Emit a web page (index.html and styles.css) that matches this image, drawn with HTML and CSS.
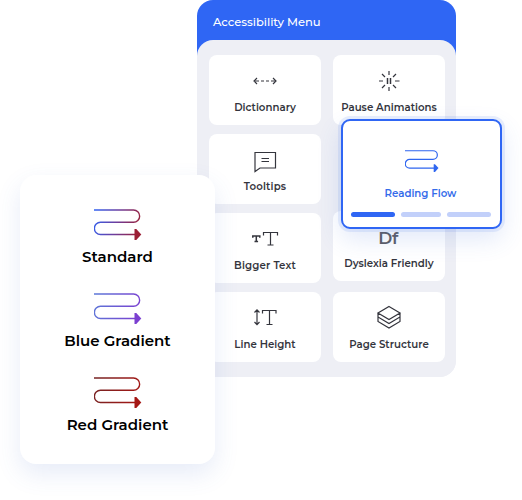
FILE: index.html
```html
<!DOCTYPE html>
<html lang="en">
<head>
<meta charset="utf-8">
<title>Accessibility Menu</title>
<link rel="stylesheet" href="styles.css">
</head>
<body>
<svg class="defs" width="0" height="0">
  <defs>
    <linearGradient id="standard" gradientUnits="userSpaceOnUse" x1="0" y1="0" x2="48" y2="12"><stop stop-color="#2f63f5"/><stop offset=".5" stop-color="#6c3e9e"/><stop offset="1" stop-color="#9c1f35"/></linearGradient>
    <linearGradient id="blue" gradientUnits="userSpaceOnUse" x1="0" y1="0" x2="48" y2="12"><stop stop-color="#5c79d8"/><stop offset="1" stop-color="#7b3fd0"/></linearGradient>
    <linearGradient id="red" gradientUnits="userSpaceOnUse" x1="0" y1="0" x2="48" y2="12"><stop stop-color="#762424"/><stop offset="1" stop-color="#a51714"/></linearGradient>
  </defs>
</svg>
<main class="stage">
  <section class="panel">
    <h1 class="title">Accessibility Menu</h1>
    <div class="body">
      <div class="column">
        <div class="tile"><svg class="icon" viewBox="0 0 28 28"><path d="M6 11l-3 3 3 3M22 11l3 3-3 3"/><path d="M3.500 14H8m2 0h3m2 0h3m2 0h4.500"/></svg><span class="label">Dictionnary</span></div>
        <div class="tile"><svg class="icon" viewBox="0 0 28 28"><path d="M4 6.500h20.500v15.500H9L4 25.500zM10.500 12.500h7.500M10.500 15.500h7.500"/></svg><span class="label looser">Tooltips</span></div>
        <div class="tile"><svg class="icon" viewBox="0 0 28 28"><path d="M12.500 10.500V7.500h14V10.500M19.500 7.500v12.500M16.500 20h6"/><path class="heavy" d="M1.800 12.700v-1.700h7v1.700M5.300 11v5.700M3.500 16.500h3.600"/></svg><span class="label looser">Bigger Text</span></div>
        <div class="tile"><svg class="icon" viewBox="0 0 28 28"><path d="M6 6v14.500M3.500 8.500l2.500-2.700 2.500 2.700M3.500 18l2.500 2.700 2.500-2.700M11.500 9.500V6.500h13.500v3M18.500 6.500v14M15.500 20.500h6"/></svg><span class="label">Line Height</span></div>
      </div>
      <div class="column second">
        <div class="tile"><svg class="icon" viewBox="0 0 28 28"><path d="M14 4v4M14 20v4M4 14h4M20 14h4.500M7 7l3 3M21 7l-3 3M7 21l3-3M21 21l-3-3"/><path class="bars" d="M12.500 11v6M15.500 11v6"/></svg><span class="label">Pause Animations</span></div>
        <div class="tile vacant"></div>
        <div class="tile"><span class="df">Df</span><span class="label">Dyslexia Friendly</span></div>
        <div class="tile last"><svg class="icon" viewBox="0 0 28 28"><path d="M14 2.500L25 9 14 15.500 3 9zM3 9v4l11 6.500L25 13V9M3 13v4.500L14 24l11-6.500V13"/></svg><span class="label">Page Structure</span></div>
      </div>
    </div>
  </section>

  <section class="popup">
    <svg class="flow small" viewBox="0 0 48 31" stroke="#2f66f0" fill="#2f66f0"><path class="line" d="M0 1h39.500a6 6 0 0 1 0 12.300H6.500a6 6 0 0 0 0 12.200H41"/><path stroke="none" d="M40.500 20h1.800l5 5.500-5 5.500h-1.800z"/></svg>
    <span class="popup-label">Reading Flow</span>
    <div class="steps"><i class="step active"></i><i class="step mid"></i><i class="step"></i></div>
  </section>

  <section class="options">
    <div class="option"><svg class="flow" viewBox="0 0 48 31" stroke="url(#standard)" fill="#9c1f35"><path class="line" d="M0 1h39.500a6 6 0 0 1 0 12.300H6.500a6 6 0 0 0 0 12.200H41"/><path stroke="none" d="M40.500 20h1.800l5 5.500-5 5.500h-1.800z"/></svg><span class="name">Standard</span></div>
    <div class="option"><svg class="flow" viewBox="0 0 48 31" stroke="url(#blue)" fill="#7b3fd0"><path class="line" d="M0 1h39.500a6 6 0 0 1 0 12.300H6.500a6 6 0 0 0 0 12.200H41"/><path stroke="none" d="M40.500 20h1.800l5 5.500-5 5.500h-1.800z"/></svg><span class="name">Blue Gradient</span></div>
    <div class="option"><svg class="flow" viewBox="0 0 48 31" stroke="url(#red)" fill="#a51714"><path class="line" d="M0 1h39.500a6 6 0 0 1 0 12.300H6.500a6 6 0 0 0 0 12.200H41"/><path stroke="none" d="M40.500 20h1.800l5 5.500-5 5.500h-1.800z"/></svg><span class="name">Red Gradient</span></div>
  </section>
</main>
</body>
</html>
```
FILE: styles.css
```css
* { box-sizing: border-box; }
body { margin: 0; background: #fff; font-family: Montserrat, Inter, sans-serif; }
.defs { position: absolute; }
.stage { position: relative; width: 522px; height: 500px; overflow: hidden; }
.panel { width: 259px; height: 377px; margin-left: 197px; border-radius: 16px; background: linear-gradient(#2f66f4 60px, #eeeff5 60px); overflow: hidden; }
.title { margin: 0; height: 40px; padding: 13px 0 0 16px; color: #fff; font-size: 11.5px; line-height: 18px; font-weight: 500; letter-spacing: -.02px; }
.body { display: flex; gap: 12px; height: 337px; padding: 15px 11px 0 12px; border-radius: 16px; background: #eeeff5; }
.column { display: flex; flex-direction: column; gap: 9px; width: 112px; }
.second { gap: 8px; }
.last { margin-top: 3px; }
.tile { display: flex; flex-direction: column; align-items: center; height: 70px; padding-top: 12px; border-radius: 8px; background: #fff; }
.vacant { background: none; }
.icon { width: 28px; height: 28px; fill: none; stroke: #34353d; stroke-width: 1.2; }
.heavy, .bars { stroke-width: 1.5; }
.label { margin-top: 5px; font-size: 10.2px; line-height: 16px; font-weight: 600; letter-spacing: .02px; color: #34353d; white-space: nowrap; }
.looser { letter-spacing: .15px; }
.df { height: 28px; padding-top: 4px; margin-left: -2px; font-size: 17px; line-height: 22px; font-weight: 600; letter-spacing: -.3px; color: #5c5d65; }
.popup { position: absolute; left: 341px; top: 119px; width: 161px; height: 110px; padding: 28px 0 0; display: flex; flex-direction: column; align-items: center; border: 2px solid #2f66f4; border-radius: 9px; background: #fff; box-shadow: 0 0 0 3px rgba(75,120,235,.12), 0 10px 24px rgba(70,115,220,.16); }
.flow { display: block; width: 48px; height: 31px; }
.line { fill: none; stroke-width: 1.4; }
.small { width: 34px; height: 22px; margin-top: 1px; }
.small .line { stroke-width: 1.7; }
.popup-label { margin: 14px 2px 0 0; font-size: 10.2px; line-height: 16px; font-weight: 600; letter-spacing: 0; color: #356bea; }
.steps { display: flex; align-items: center; gap: 6px; margin: 10px 2px 0 0; }
.step { width: 44px; height: 5px; border-radius: 3px; background: #c2d0fa; }
.active { background: #2f66f4; }
.mid { width: 40px; }
.options { position: absolute; left: 20px; top: 175px; width: 195px; height: 289px; padding-top: 34px; display: flex; flex-direction: column; border-radius: 16px; background: #fff; box-shadow: 0 10px 24px rgba(70,110,200,.13); }
.option { display: flex; flex-direction: column; align-items: center; height: 84px; }
.name { margin-top: 6px; font-size: 15px; line-height: 22px; font-weight: 600; color: #000; white-space: nowrap; }
```
